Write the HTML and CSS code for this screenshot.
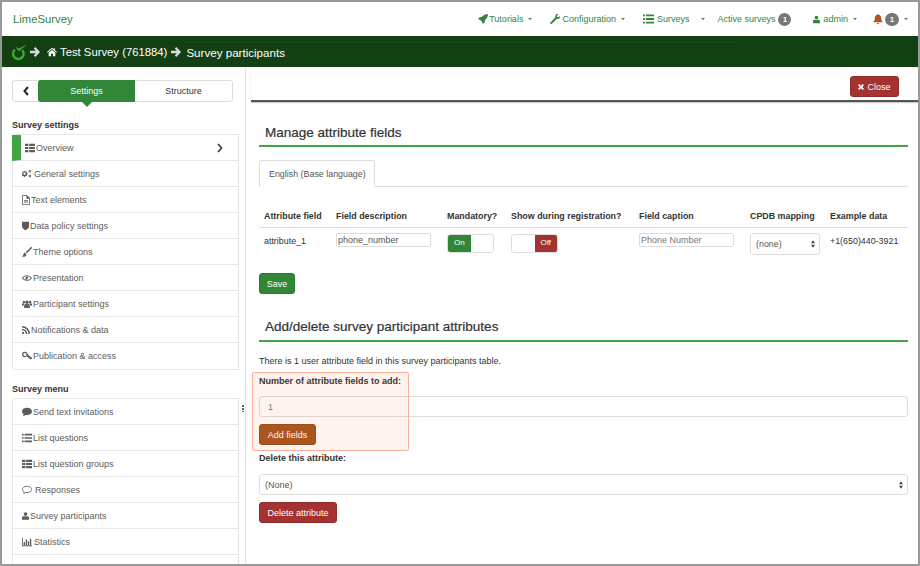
FILE: index.html
```html
<!DOCTYPE html>
<html lang="en">
<head>
<meta charset="utf-8">
<title>Survey participants</title>
<link rel="stylesheet" href="styles.css">
</head>
<body>
<svg class="defs" width="0" height="0" aria-hidden="true">
  <symbol id="i-list" viewBox="0 0 12 10"><path d="M0 0h2v2H0zM3 0h9v2H3zM0 4h2v2H0zM3 4h9v2H3zM0 8h2v2H0zM3 8h9v2H3z"/></symbol>
  <symbol id="i-th" viewBox="0 0 12 10"><path d="M0 0h4v2.6H0zM5 0h7v2.6H5zM0 3.7h4v2.6H0zM5 3.7h7v2.6H5zM0 7.4h4V10H0zM5 7.4h7V10H5z"/></symbol>
  <symbol id="i-user" viewBox="0 0 10 11"><circle cx="5" cy="2.8" r="2.6"/><path d="M0 11V8.2C0 6.5 1.5 5.6 2.8 5.4c1.3 1 3.1 1 4.4 0C8.500 5.600 10 6.500 10 8.200V11z"/></symbol>
  <symbol id="i-users" viewBox="0 0 14 11"><circle cx="7" cy="3" r="2.400"/><circle cx="2.600" cy="2.800" r="1.700"/><circle cx="11.400" cy="2.800" r="1.700"/><path d="M3 11V8c0-1.800 1.500-2.600 2.400-2.800 1 .7 2.200.7 3.200 0C9.500 5.400 11 6.200 11 8v3zM0 8V6c0-1 .9-1.600 1.700-1.600.7.500 1.300.6 2 .5C2.900 5.600 2.200 6.600 2.200 8zM14 8V6c0-1-.9-1.600-1.700-1.600-.7.500-1.300.6-2 .5.800.700 1.500 1.700 1.500 3.100z"/></symbol>
  <symbol id="i-file" viewBox="0 0 10 12"><path fill-rule="evenodd" d="M0 0h6.500L10 3.500V12H0zM1 1v10h8V4.500H5.500V1zM2.500 6h5v1h-5zM2.500 8h5v1h-5z"/></symbol>
  <symbol id="i-shield" viewBox="0 0 10 12"><path d="M0 0h10v6c0 3-2.500 5-5 6-2.500-1-5-3-5-6z"/></symbol>
  <symbol id="i-brush" viewBox="0 0 12 12"><path d="M11.800.2c-.5-.4-1.200-.2-1.700.3L4.500 6.300l1.300 1.300 5.700-5.800c.5-.5.700-1.200.3-1.600zM3.800 7C2 7 1.800 8.500 1.600 9.500 1.400 10.300.8 10.700 0 11c1.500 1 4.200 1 5-.8.400-.8.200-1.700-1.200-3.200z"/></symbol>
  <symbol id="i-eye" viewBox="0 0 14 10"><path fill-rule="evenodd" d="M0 5c1.500-2.600 4-4 7-4s5.500 1.400 7 4c-1.500 2.600-4 4-7 4S1.500 7.600 0 5zm1.600 0C3 6.800 4.800 7.800 7 7.800S11 6.800 12.400 5C11 3.200 9.200 2.200 7 2.200S3 3.200 1.600 5zM7 2.600 9 4 6 8.500 4.500 7.500 5.300 6.200C4.700 4.800 5.700 3 7 2.600z"/></symbol>
  <symbol id="i-rss" viewBox="0 0 10 10"><circle cx="1.400" cy="8.600" r="1.400"/><path d="M0 3.300v1.900a4.800 4.800 0 0 1 4.800 4.800h1.900A6.700 6.700 0 0 0 0 3.300zM0 0v1.900A8.100 8.100 0 0 1 8.100 10H10A10 10 0 0 0 0 0z"/></symbol>
  <symbol id="i-key" viewBox="0 0 12 10"><path fill-rule="evenodd" d="M3.500 0a3.300 3.300 0 0 1 3.200 2.400l1.800 2.400 1.300.1.200 1.200 1.800.6.200 2-2.200.3-4-3.600A3.300 3.300 0 1 1 3.500 0zm0 1.400a1.900 1.900 0 1 0 0 3.800 1.900 1.900 0 0 0 0-3.800z"/></symbol>
  <symbol id="i-comment" viewBox="0 0 12 10"><path d="M6 0c3.300 0 6 1.800 6 4.300S9.300 8.600 6 8.600c-.6 0-1.100 0-1.600-.1C3.400 9.400 2.200 9.800 1 10c.6-.7 1-1.400 1.100-2.300C.8 6.900 0 5.700 0 4.300 0 1.800 2.700 0 6 0z"/></symbol>
  <symbol id="i-comment-o" viewBox="0 0 12 10"><path fill="none" stroke="currentColor" d="M6 .5c3 0 5.500 1.600 5.500 3.800S9 8.100 6 8.100c-.6 0-1.200 0-1.700-.2-.8.700-1.500 1.100-2.300 1.300.4-.6.600-1.200.6-1.900C1.300 6.500.5 5.500.5 4.300.5 2.100 3 .5 6 .5z"/></symbol>
  <symbol id="i-bars" viewBox="0 0 12 10"><path d="M0 0h1v9h11v1H0zM2 5h1.600v3.500H2zM4.500 2h1.600v6.500H4.500zM7 4h1.600v4.500H7zM9.500 1h1.600v7.500H9.500z"/></symbol>
  <symbol id="i-cogs" viewBox="0 0 13 11"><path fill-rule="evenodd" d="M4 2.200l.9.300.7-.6 1 1-.6.800.3.800h1v1.500h-1l-.3.800.6.800-1 1-.7-.6-.9.300v1H2.600v-1l-.9-.3-.7.600-1-1 .6-.8-.3-.8H-.3V4.500h1l.3-.8-.6-.8 1-1 .7.600.9-.3v-1H4zM3.300 3.700a1.500 1.500 0 1 0 0 3 1.500 1.500 0 0 0 0-3z"/><path fill-rule="evenodd" d="M10.200.3a1.700 1.700 0 1 1 0 3.400 1.700 1.700 0 0 1 0-3.400zm0 1a.7.700 0 1 0 0 1.400.7.700 0 0 0 0-1.400zM10.200 6.500a1.700 1.700 0 1 1 0 3.400 1.700 1.700 0 0 1 0-3.400zm0 1a.7.700 0 1 0 0 1.400.7.700 0 0 0 0-1.400z"/></symbol>
  <symbol id="i-arrow" viewBox="0 0 10 10"><path d="M5.300 0 10 5l-4.700 5-1.500-1.500 2-2.200H0V3.700h5.800l-2-2.200z"/></symbol>
  <symbol id="i-home" viewBox="0 0 12 10"><path d="M6 0l2 1.700V.6h1.500V3L12 5.100l-.7.800L6 1.500.7 5.900 0 5.100zM2 6l4-3.300L10 6v4H7.200V7.200H4.800V10H2z"/></symbol>
  <symbol id="i-rocket" viewBox="0 0 11 11"><path d="M11 0c-.1 3-1.100 5-3.300 6.700l-.3 2.600L5 11l-.3-2.300-2.400-2.400L0 6l1.700-2.400 2.600-.3C6 1.100 8 .100 11 0z"/></symbol>
  <symbol id="i-wrench" viewBox="0 0 11 11"><path d="M10.800 2.200c.4 1.400-.1 2.500-1 3-.7.400-1.500.4-2.200.100L2 10.800c-.5.400-1.100.4-1.500 0s-.4-1 0-1.400L6 3.700c-.3-.8-.2-1.600.2-2.300.6-1 1.800-1.600 3-1.200L7.600 1.800l.3 1.400 1.400.4z"/></symbol>
  <symbol id="i-bell" viewBox="0 0 10 11"><path d="M5 0c.5 0 .8.300.8.800 1.700.4 2.700 1.800 2.700 3.500 0 2.200.5 3.200 1.500 4.200v.7H0v-.7c1-1 1.500-2 1.500-4.200 0-1.700 1-3.100 2.700-3.500C4.200.300 4.500 0 5 0zM3.700 9.800h2.600C6.200 10.500 5.700 11 5 11s-1.200-.5-1.300-1.200z"/></symbol>
  <symbol id="i-times" viewBox="0 0 8 8"><path d="M1.600 0 4 2.400 6.400 0 8 1.600 5.600 4 8 6.400 6.400 8 4 5.600 1.600 8 0 6.400 2.400 4 0 1.600z"/></symbol>
  <symbol id="i-updown" viewBox="0 0 6 11"><path d="M3 0l3 4.300H0zM0 6.700h6L3 11z"/></symbol>
  <symbol id="i-lime" viewBox="0 0 15 17"><path fill="none" stroke="#3fa535" stroke-width="2.400" d="M10.300 6.200A5.300 5.300 0 1 1 3 5.600"/><path d="M3.200 2.800 7 7.400 15 .3 7.100 4.500z" fill="#3fa535"/></symbol>
</svg>

<div class="frame">
  <header class="topnav">
    <a class="brand">LimeSurvey</a>
    <nav class="menu">
      <span class="mi"><svg class="ic i10 rocket"><use href="#i-rocket"/></svg>Tutorials<i class="caret"></i></span>
      <span class="mi"><svg class="ic i10"><use href="#i-wrench"/></svg>Configuration<i class="caret"></i></span>
      <span class="mi"><svg class="ic i11"><use href="#i-list"/></svg>Surveys<i class="caret wide"></i></span>
      <span class="mi tight">Active surveys<b class="badge">1</b></span>
      <span class="mi loose"><svg class="ic i7"><use href="#i-user"/></svg>admin<i class="caret"></i></span>
      <span class="mi near"><svg class="ic i10 bell"><use href="#i-bell"/></svg><b class="badge big">1</b><i class="caret"></i></span>
    </nav>
  </header>

  <div class="crumbs">
    <svg class="lime"><use href="#i-lime"/></svg>
    <svg class="arr"><use href="#i-arrow"/></svg>
    <svg class="home"><use href="#i-home"/></svg>
    <span>Test Survey (761884)</span>
    <svg class="arr arr-2"><use href="#i-arrow"/></svg>
    <span class="crumb-last">Survey participants</span>
  </div>

  <div class="main">
    <aside class="sidebar">
      <div class="tabs">
        <span class="back"><svg width="6" height="10" viewBox="0 0 6 10"><path d="M5 1 1.500 5 5 9" fill="none" stroke="#222" stroke-width="2"/></svg></span>
        <span class="tab on">Settings</span>
        <span class="tab">Structure</span>
      </div>
      <h4 class="side-h first">Survey settings</h4>
      <ul class="side-list">
        <li class="active"><svg class="ic i10"><use href="#i-th"/></svg>Overview<svg class="chev" width="6" height="10" viewBox="0 0 6 10"><path d="M1 1l3.500 4L1 9" fill="none" stroke="#444" stroke-width="1.800"/></svg></li>
        <li><svg class="ic i10 gap2"><use href="#i-cogs"/></svg>General settings</li>
        <li><svg class="ic i8"><use href="#i-file"/></svg>Text elements</li>
        <li><svg class="ic i6"><use href="#i-shield"/></svg>Data policy settings</li>
        <li><svg class="ic i10"><use href="#i-brush"/></svg>Theme options</li>
        <li><svg class="ic i10"><use href="#i-eye"/></svg>Presentation</li>
        <li><svg class="ic i10"><use href="#i-users"/></svg>Participant settings</li>
        <li><svg class="ic i8"><use href="#i-rss"/></svg>Notifications &amp; data</li>
        <li><svg class="ic i10"><use href="#i-key"/></svg>Publication &amp; access</li>
      </ul>
      <h4 class="side-h">Survey menu</h4>
      <ul class="side-list">
        <li><svg class="ic i10"><use href="#i-comment"/></svg>Send text invitations</li>
        <li><svg class="ic i10"><use href="#i-list"/></svg>List questions</li>
        <li><svg class="ic i10"><use href="#i-th"/></svg>List question groups</li>
        <li><svg class="ic i10 wide-gap"><use href="#i-comment-o"/></svg>Responses</li>
        <li><svg class="ic i6"><use href="#i-user"/></svg>Survey participants</li>
        <li><svg class="ic i10 gap2"><use href="#i-bars"/></svg>Statistics</li>
        <li></li>
      </ul>
      <span class="handle"></span>
    </aside>

    <section class="content">
      <div class="toolbar">
        <button class="btn red close"><svg class="x"><use href="#i-times"/></svg>Close</button>
      </div>
      <div class="body">
        <h3 class="title">Manage attribute fields</h3>
        <div class="langtabs"><span class="langtab">English (Base language)</span></div>
        <table class="attrs">
          <thead>
            <tr><th class="c1">Attribute field</th><th class="c2">Field description</th><th class="c3">Mandatory?</th><th class="c4">Show during registration?</th><th class="c5">Field caption</th><th class="c6">CPDB mapping</th><th>Example data</th></tr>
          </thead>
          <tbody>
            <tr>
              <td>attribute_1</td>
              <td><input class="mini w95" value="phone_number" readonly></td>
              <td><span class="switch"><span class="sw-on">On</span><span class="sw-blank"></span></span></td>
              <td><span class="switch"><span class="sw-blank"></span><span class="sw-off">Off</span></span></td>
              <td><input class="mini w95 ph" value="Phone Number" readonly></td>
              <td><div class="sel small"><span>(none)</span><svg class="updown"><use href="#i-updown"/></svg></div></td>
              <td>+1(650)440-3921</td>
            </tr>
          </tbody>
        </table>
        <button class="btn green save">Save</button>
        <h3 class="title second">Add/delete survey participant attributes</h3>
        <p class="note">There is 1 user attribute field in this survey participants table.</p>
        <label class="lbl">Number of attribute fields to add:</label>
        <input class="field" value="1" readonly>
        <button class="btn add">Add fields</button>
        <label class="lbl del">Delete this attribute:</label>
        <div class="sel full"><span>(None)</span><svg class="updown"><use href="#i-updown"/></svg></div>
        <button class="btn red delbtn">Delete attribute</button>
        <div class="highlight"></div>
      </div>
    </section>
  </div>
</div>
</body>
</html>
```
FILE: styles.css
```css
* { box-sizing: border-box; }
html, body { margin: 0; height: 566px; overflow: hidden; background: #fff; }
body { font-family: "Liberation Sans", Arial, sans-serif; font-size: 9px; color: #333; }
.defs { position: absolute; }
svg { fill: currentColor; flex: none; }
.frame { position: relative; width: 920px; height: 566px; border: 2px solid #999; overflow: hidden; display: flex; flex-direction: column; background: #fff; }

.topnav { height: 34px; flex: none; display: flex; align-items: center; justify-content: space-between; padding: 0 10px 0 11px; }
.brand { color: #328637; font-size: 11.3px; }
.menu { display: flex; align-items: center; gap: 18px; color: #328637; font-size: 9px; }
.mi { display: flex; align-items: center; }
.mi.tight { margin-left: -6px; }
.mi.loose { margin-left: 4px; }
.mi.near { margin-left: -2px; }
.caret { width: 0; height: 0; border: 2.5px solid transparent; border-top-color: #328637; border-bottom: 0; margin-left: 5px; }
.caret.wide { margin-left: 12px; }
.badge { display: inline-block; min-width: 13px; height: 13px; line-height: 13px; margin-left: 3px; text-align: center; border-radius: 7px; background: #777; color: #fff; font-size: 8px; }
.badge.big { margin-left: 1px; min-width: 14px; }
.ic { margin-right: 2px; }
.rocket { margin-right: 1px; }
.i11 { width: 11px; height: 10px; margin-right: 3px; }
.i10 { width: 10px; height: 10px; }
.i8 { width: 8px; height: 10px; }
.i7 { width: 7px; height: 9px; margin-right: 3px; }
.i6 { width: 7px; height: 10px; }
.bell { color: #b4521f; margin-right: 1px; }

.crumbs { position: relative; height: 31px; flex: none; display: flex; align-items: center; background: #134013; color: #fff; font-size: 11.3px; padding: 1px 0 0 10px; }
.crumbs::after { content: ""; position: absolute; left: 183px; top: 6px; width: 550px; height: 1px; background: #1c4a1c; }
.lime { width: 15px; height: 17px; margin-right: 1px; }
.arr { width: 10px; height: 10px; color: #ddd; margin: 0 5px 0 2px; }
.arr-2 { margin-left: 4px; }
.home { width: 10px; height: 10px; margin: 0 3px 0 2px; }
.crumb-last { font-size: 11.6px; }

.main { flex: 1; display: flex; min-height: 0; }
.sidebar { position: relative; width: 244px; flex: none; padding: 13px 0 0 10px; border-right: 1px solid #e4e4e4; overflow: hidden; }
.tabs { display: flex; width: 221px; height: 22px; border: 1px solid #ddd; border-radius: 3px; position: relative; }
.back { width: 25px; display: flex; align-items: center; justify-content: center; }
.tab { flex: 1; display: flex; align-items: center; justify-content: center; color: #333; }
.tab.on { position: relative; margin: -1px 0; background: #328637; color: #fff; border-radius: 3px 0 0 3px; }
.tab.on::after { content: ""; position: absolute; bottom: -5px; left: 44px; border: 5px solid transparent; border-top-color: #328637; border-bottom: 0; }
.side-h { margin: 14px 0 3px; font-size: 9px; font-weight: bold; color: #333; height: 11px; line-height: 11px; }
.side-h.first { margin: 18px 0 3px; }
.side-list { list-style: none; margin: 0; padding: 0; width: 227px; border: 1px solid #e8e8e8; border-right: 1px solid #e0e0e0; border-radius: 3px 0 0 3px; color: #5c5c5c; }
.side-list li { position: relative; height: 26px; display: flex; align-items: center; padding-left: 9px; border-bottom: 1px solid #e8e8e8; }
.side-list li:last-child { border-bottom: 0; }
.side-list .ic { margin-right: 1px; }
.side-list .gap2 { margin-right: 2px; }
.side-list .wide-gap { margin-right: 3px; }
.side-list li.active { padding-left: 4px; border-left: 9px solid #3fa545; margin-left: -1px; }
.chev { margin-left: auto; margin-right: 15px; }
.handle { position: absolute; left: 240px; top: 338px; width: 2px; height: 7px; background: repeating-linear-gradient(#4a6d4a 0 2px, transparent 2px 3px); }

.content { flex: 1; min-width: 0; padding-left: 5px; }
.toolbar { height: 35px; display: flex; justify-content: flex-end; align-items: flex-start; padding: 9px 19px 0 0; border-bottom: 2px solid #555; box-shadow: 0 1px 1px rgba(0,0,0,.2); }
.btn { display: block; height: 21px; padding: 0 8px; border: 1px solid; border-radius: 3px; color: #fff; font: 9px "Liberation Sans", Arial, sans-serif; }
.red { background: #a33231; border-color: #8f2c2b; }
.green { background: #328637; border-color: #2a7a30; }
.close { display: flex; align-items: center; justify-content: center; width: 49px; padding: 0; }
.x { width: 6px; height: 6px; margin-right: 3px; }
.body { position: relative; padding: 0 10px 0 8px; }
.title { margin: 0; padding: 23px 6px 6px; height: 45px; font-size: 13.5px; font-weight: 500; color: #333; border-bottom: 2px solid #3fa545; -webkit-text-stroke: .2px #333; }
.title.second { height: 48px; padding: 25px 6px 5px; }
.langtabs { margin-top: 13px; height: 27px; border-bottom: 1px solid #ddd; }
.langtab { display: inline-flex; align-items: center; height: 27px; padding: 0 8px 0 9px; border: 1px solid #ddd; border-bottom-color: #fff; border-radius: 3px 3px 0 0; background: #fff; color: #555; font-size: 8.9px; }
.attrs { width: 649px; margin-top: 19px; border-collapse: collapse; table-layout: fixed; font-size: 8.9px; }
.attrs th { height: 21px; padding: 0 5px; text-align: left; color: #333; border-bottom: 1px solid #ddd; white-space: nowrap; }
.attrs td { padding: 5px; height: 46px; vertical-align: top; line-height: 16px; }
.c1 { width: 72px; } .c2 { width: 111px; } .c3 { width: 64px; } .c4 { width: 128px; } .c5 { width: 111px; } .c6 { width: 80px; }
.mini { display: block; height: 14px; padding: 0 1px; border: 1px solid #ddd; border-radius: 2px; color: #555; font: 9px "Liberation Sans", Arial, sans-serif; outline: 0; }
.w95 { width: 95px; }
.ph { color: #777; }
.switch { display: flex; width: 47px; height: 19px; border: 1px solid #ddd; border-radius: 3px; overflow: hidden; margin-top: 1px; }
.sw-on, .sw-off, .sw-blank { flex: 1; display: flex; align-items: center; justify-content: center; color: #fff; font-size: 8px; }
.sw-on { background: #328637; }
.sw-off { background: #a33231; }
.sel { display: flex; align-items: center; justify-content: space-between; border: 1px solid #ddd; border-radius: 3px; color: #555; background: #fff; line-height: normal; }
.sel.small { width: 70px; height: 22px; padding: 0 4px 0 5px; }
.sel.full { width: 649px; height: 21px; margin-top: 10px; padding: 0 4px 0 5px; }
.updown { width: 4px; height: 8px; color: #444; }
.save { width: 36px; padding: 0; }
.note { margin: 14px 0 0; height: 11px; line-height: 11px; color: #333; }
.lbl { display: block; font-weight: bold; color: #333; margin-top: 9px; height: 11px; line-height: 11px; }
.lbl.del { margin-top: 8px; }
.field { display: block; width: 649px; height: 21px; margin-top: 9px; padding: 0 8px; border: 1px solid #ddd; border-radius: 3px; font: 9px "Liberation Sans", Arial, sans-serif; color: #777; outline: 0; }
.add { margin-top: 7px; width: 57px; padding: 0; background: #a55520; border-color: #964d1d; }
.delbtn { margin-top: 7px; width: 78px; padding: 0; }
.highlight { position: absolute; left: 1px; top: 270px; width: 157px; height: 79px; background: rgba(255,90,40,.07); border: 1px solid #ffae9a; border-radius: 2px; }
```
